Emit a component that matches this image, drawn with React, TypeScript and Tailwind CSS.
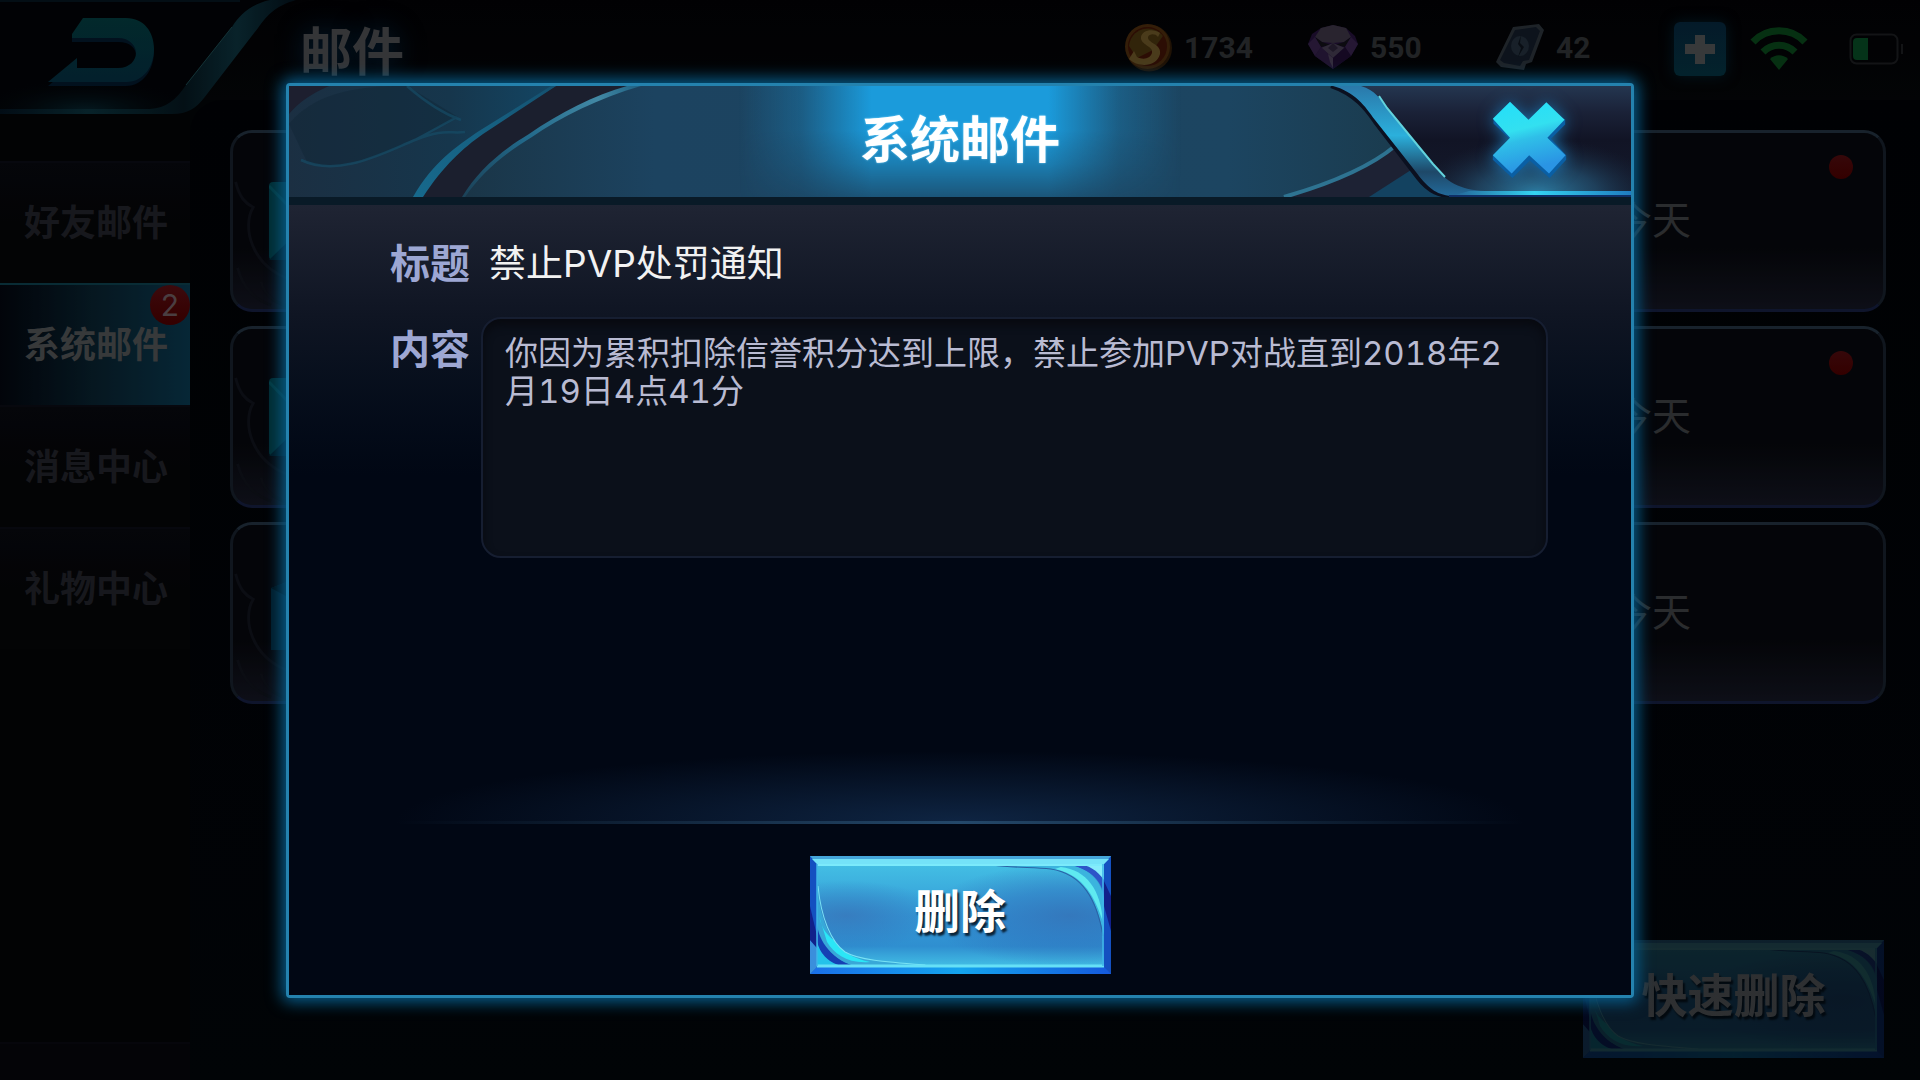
import { useId } from "react";
import clsx from "clsx";

const tabs = [
  { label: "好友邮件", count: 0 },
  { label: "系统邮件", count: 2 },
  { label: "消息中心", count: 0 },
  { label: "礼物中心", count: 0 },
];

const mails = [
  { id: 1, date: "今天", unread: true },
  { id: 2, date: "今天", unread: true },
  { id: 3, date: "今天", unread: false },
];

const ACTIVE_TAB = "系统邮件";

function CoinIcon() {
  return (
    <svg viewBox="0 0 48 50" className="h-[50px] w-12 shrink-0" aria-hidden="true">
      <ellipse cx="25" cy="26" rx="23" ry="23.5" fill="#2e1b08" />
      <circle cx="23.5" cy="24.5" r="22.5" fill="#4b2c0d" />
      <circle cx="23.5" cy="24.5" r="19.5" fill="#3f1306" />
      <path d="M5 24a19 19 0 0 1 34-10l-10 14-16 8z" fill="#47340f" />
      <path
        d="M36 11c-7-5-18-3-19 4-1 8 13 9 11 16-2 6-9 7-15 4l-3-6-5 8c9 9 28 8 31-5 2-10-13-11-12-17 1-3 7-4 10 0z"
        fill="#6b5528"
      />
    </svg>
  );
}

function GemIcon() {
  return (
    <svg viewBox="0 0 50 44" className="h-11 w-[50px] shrink-0" aria-hidden="true">
      <path d="M25 0 38 3 47 11 50 19 43 31 25 44 7 31 0 19 4 9 13 3z" fill="#24123a" />
      <path d="M13 3 25 0 38 3 43 12 36 17 25 18 14 17 7 12z" fill="#3b3444" />
      <path d="M7 12 14 17 23 20 13 22z M43 12 36 17 27 20 37 22z" fill="#121018" />
      <path d="M25 18 37 23 25 33 13 23z" fill="#443c50" />
      <path d="M25 18 20 23 25 27 30 23z" fill="#2c2338" />
      <path d="M0 19 7 12 13 22 7 31z M50 19 43 12 37 22 43 31z" fill="#35224a" />
      <path d="M13 22 25 33V44L7 31z" fill="#2f1d44" />
      <path d="M37 22 25 33V44L43 31z" fill="#1f0e32" />
      <path d="m20 29 5 4v10l-3-6z" fill="#4a4056" />
    </svg>
  );
}

function CardIcon() {
  return (
    <svg viewBox="0 0 48 46" className="h-[46px] w-12 shrink-0" aria-hidden="true">
      <path d="M17 3 43 0 48 6 36 38 30 40 28 46 5 43 0 38z" fill="#2c333a" />
      <path d="M19 6 40 3 44 7 33 36 27 37 24 42 8 39 4 36z" fill="#131c29" />
      <ellipse cx="24" cy="22" rx="9" ry="10" fill="#232f3b" />
      <path d="m25 11-3 9 3 4-3 9 6-10-4-4z" fill="#0d141d" />
    </svg>
  );
}

function WifiIcon() {
  return (
    <svg
      viewBox="0 0 58 44"
      className="h-11 w-[58px]"
      fill="none"
      stroke="#0a461b"
      strokeWidth="7"
      role="img"
      aria-label="WiFi"
    >
      <path d="M3 15C17 0 41 0 55 15" />
      <path d="M13 25C22 16 36 16 45 25" />
      <path d="M29 43 20 32c5-5 13-5 18 0z" fill="#0a461b" stroke="none" />
    </svg>
  );
}

function BatteryIcon() {
  return (
    <svg viewBox="0 0 55 32" className="h-8 w-[55px]" role="img" aria-label="电量">
      <rect x="1.5" y="1.5" width="47" height="29" rx="6" fill="none" stroke="#1c1d20" strokeWidth="2" />
      <path d="M52 11h2v10h-2z" fill="#1c1d20" />
      <path d="M8 5h11v22H8a4 4 0 0 1-4-4V9a4 4 0 0 1 4-4z" fill="#084a25" />
    </svg>
  );
}

function BackCorner() {
  return (
    <svg viewBox="0 0 300 116" className="h-[116px] w-[300px]" aria-hidden="true">
      <defs>
        <linearGradient id="corner-line" x1="0" x2="1">
          <stop offset="0" stopColor="#04131f" />
          <stop offset=".3" stopColor="#0c323c" />
          <stop offset=".62" stopColor="#06171f" />
          <stop offset=".8" stopColor="#0d323d" />
          <stop offset="1" stopColor="#04121c" />
        </linearGradient>
        <radialGradient id="corner-glow" cx="85" cy="112" r="110" gradientUnits="userSpaceOnUse" gradientTransform="matrix(1 0 0 .3 0 78)">
          <stop offset="0" stopColor="#072630" />
          <stop offset="1" stopColor="#020408" stopOpacity="0" />
        </radialGradient>
        <linearGradient id="back-arrow" x1="0" y1="0" x2="0" y2="1">
          <stop offset="0" stopColor="#043b3e" />
          <stop offset="1" stopColor="#052e40" />
        </linearGradient>
      </defs>
      <path d="M0 0H264C246 8 240 16 230 30L190 86C182 100 172 110 156 110H0z" fill="#020408" />
      <path d="M0 60H210L190 90C182 104 172 110 156 110H0z" fill="url(#corner-glow)" />
      <path
        d="M0 109H150C166 108 176 100 186 85L232 27C240 14 252 4 270 0H296C276 6 268 14 258 28L204 98C196 108 188 114 172 114H0z"
        fill="url(#corner-line)"
      />
      <path d="M186 85 232 27" stroke="#1c484e" strokeWidth="1" />
      <path d="M0 1H240" stroke="#05151f" strokeWidth="2" />
      <path
        d="M83 22H126C144 22 154 36 154 52S144 86 126 86H48L77 62V72H118C130 72 136 64 136 56S130 42 118 42H72V37z"
        fill="#03192b"
      />
      <path
        d="M83 18H126C144 18 154 32 154 49S144 82 126 82H48L77 58V68H118C130 68 136 60 136 53S130 38 118 38H72V34z"
        fill="url(#back-arrow)"
      />
    </svg>
  );
}

function GameButton({ children, dim = false }: { children: string; dim?: boolean }) {
  const id = useId();
  return (
    <button
      type="button"
      className={clsx(
        "relative grid h-[118px] w-[301px] cursor-pointer place-items-center",
        dim && "opacity-25",
      )}
    >
      <svg
        viewBox="0 0 300 118"
        preserveAspectRatio="none"
        className="absolute inset-0 size-full"
        aria-hidden="true"
      >
        <defs>
          <linearGradient id={`${id}face`} x1="0" y1="0" x2="0" y2="1">
            <stop offset="0" stopColor="#43bfe4" />
            <stop offset=".5" stopColor="#3499d6" />
            <stop offset=".8" stopColor="#2f8fd0" />
            <stop offset="1" stopColor="#43c0e6" />
          </linearGradient>
          <radialGradient id={`${id}right`} cx=".88" cy=".5" r=".5">
            <stop offset="0" stopColor="#3470b6" stopOpacity=".8" />
            <stop offset=".5" stopColor="#2f70bc" stopOpacity=".5" />
            <stop offset="1" stopColor="#2d69b4" stopOpacity="0" />
          </radialGradient>
          <radialGradient id={`${id}left`} cx=".1" cy=".5" r=".34">
            <stop offset="0" stopColor="#3874b8" stopOpacity=".75" />
            <stop offset="1" stopColor="#2f6cb8" stopOpacity="0" />
          </radialGradient>
          <linearGradient id={`${id}bottom`}>
            <stop offset="0" stopColor="#1a6fe8" />
            <stop offset=".5" stopColor="#14a4ee" />
            <stop offset="1" stopColor="#1559dd" />
          </linearGradient>
        </defs>
        <path d="M0 0H300V118H0z" fill="#1450c0" />
        <path d="M0 0H300L293 8H7z" fill="#45a6da" />
        <path d="M2 3H298L293 8H7z" fill="#74e2f8" />
        <path d="M0 118 7 111H293L300 118z" fill={`url(#${id}bottom)`} />
        <path d="M0 84 7 92V111L0 118z" fill="#3a8fdc" />
        <path d="M293 25 300 40V75L293 50z" fill="#11208a" />
        <path d="M0 50 7 80V92L0 84z" fill="#11208a" />
        <path d="M7 8H293V111H7z" fill={`url(#${id}face)`} />
        <path d="M7 8H293V111H7z" fill={`url(#${id}right)`} />
        <path d="M7 8H293V111H7z" fill={`url(#${id}left)`} />
        {/* lower left ribbon */}
        <path d="M7 84C12 98 22 106 34 110H7z" fill="#24c2ea" />
        <path d="M7 60C10 90 24 104 46 110H32C16 106 10 96 7 86z" fill="#1540b4" />
        <path d="M7 30C10 62 20 86 34 96 46 104 74 106 115 110H44C18 102 7 80 7 66z" fill="#38a8d8" />
        <path d="M9 60C12 74 18 80 24 84 32 96 42 102 60 106 38 108 24 98 17 86z" fill="#2be6f6" />
        <path d="M8 30C11 62 21 86 35 96 48 104 76 106 115 109" fill="none" stroke="#79e3f5" strokeWidth="1" />
        {/* upper right ribbon */}
        <path d="M262 8H293V30C286 16 276 10 262 8z" fill="#86ecfb" />
        <path d="M250 8C274 10 288 20 293 38V24C286 14 278 9 266 8z" fill="#2d55c8" />
        <path d="M182 8H254C278 12 290 24 293 42V80C286 44 272 18 240 13 222 11 204 12 182 8z" fill="#3bb4de" />
        <path d="M250 11C276 14 290 34 292 66 282 34 268 18 244 13z" fill="#5feaf0" />
        <path d="M182 9C204 12 222 11 240 13 272 18 286 44 292 80" fill="none" stroke="#2a62a6" strokeWidth="1" />
        <path d="M7 9H293" stroke="#7beafb" strokeWidth="2" />
        <path d="M7 110H293" stroke="#66e0f6" strokeWidth="3" />
        <path d="M7 8V110M292 8V110" stroke="#3fb6ea" strokeWidth="1.5" />
      </svg>
      <span className="relative pb-2 text-[46px] leading-none font-bold text-white [text-shadow:2px_3px_2px_#0a2236]">
        {children}
      </span>
    </button>
  );
}

function MailIcon({ opened }: { opened: boolean }) {
  return (
    <svg viewBox="0 0 78 78" className="size-[78px]" aria-hidden="true">
      {opened ? (
        <>
          <path d="M2 14 39 0 76 14V76H2z" fill="#04283a" />
          <path d="M2 14 39 34 76 14 39 0z" fill="#02151f" />
        </>
      ) : (
        <>
          <rect width="78" height="78" rx="4" fill="#034048" />
          <path d="M0 78 39 40 78 78z" fill="#02222e" />
          <path d="M0 4 39 44 78 4" fill="none" stroke="#06525c" strokeWidth="3" />
        </>
      )}
    </svg>
  );
}

function MailRow({ mail }: { mail: (typeof mails)[number] }) {
  return (
    <li className="relative flex h-[182px] items-center overflow-hidden rounded-[22px] border-3 border-t-[#233240] border-r-[#17202b] border-b-[#161f40] border-l-[#17202b] bg-linear-to-b from-[#07080d] from-65% to-[#141622] pr-[192px] pl-9">
      <svg
        viewBox="0 0 60 180"
        className="absolute top-0 left-0 h-full w-[60px]"
        fill="none"
        stroke="#10131c"
        strokeWidth="3"
        aria-hidden="true"
      >
        <path d="M2 50C6 66 12 72 20 76 8 96 18 136 58 150" />
        <path d="M4 138C10 160 22 170 38 176M28 152C32 168 44 174 58 178" />
      </svg>
      <MailIcon opened={!mail.unread} />
      <time className="ml-auto pb-1 text-[39px] leading-none font-normal text-[#3d3f43]">{mail.date}</time>
      {mail.unread && (
        <span className="absolute top-[22px] right-[30px] size-6 rounded-full bg-linear-to-b from-[#4d0c0f] to-[#4a0000]" />
      )}
    </li>
  );
}

function DialogHeaderArt() {
  return (
    <svg
      viewBox="0 0 1342 111"
      preserveAspectRatio="none"
      className="absolute inset-0 size-full"
      aria-hidden="true"
    >
      <defs>
        <linearGradient id="bar-left">
          <stop offset="0" stopColor="#1b2f42" />
          <stop offset=".12" stopColor="#16364c" />
          <stop offset=".2" stopColor="#134664" />
        </linearGradient>
        <linearGradient id="bar-main" x1="174" x2="1130" gradientUnits="userSpaceOnUse">
          <stop offset="0" stopColor="#1a3547" />
          <stop offset=".2" stopColor="#1c4360" />
          <stop offset=".8" stopColor="#1c4561" />
          <stop offset="1" stopColor="#1a3a4c" />
        </linearGradient>
        <linearGradient id="glow-x">
          <stop offset="0" stopColor="#1b98d8" stopOpacity="0" />
          <stop offset=".14" stopColor="#1b98d8" stopOpacity=".3" />
          <stop offset=".3" stopColor="#1b9bdb" />
          <stop offset=".7" stopColor="#1b9bdb" />
          <stop offset=".86" stopColor="#1b98d8" stopOpacity=".3" />
          <stop offset="1" stopColor="#1b98d8" stopOpacity="0" />
        </linearGradient>
        <linearGradient id="glow-y" x1="0" y1="0" x2="0" y2="1">
          <stop offset="0" stopColor="#fff" />
          <stop offset=".4" stopColor="#fff" />
          <stop offset=".7" stopColor="#aaa" />
          <stop offset="1" stopColor="#333" />
        </linearGradient>
        <mask id="glow-mask">
          <path d="M450 0H892V111H450z" fill="url(#glow-y)" />
        </mask>
        <linearGradient id="edge-outer" x1="127" y1="111" x2="267" y2="0" gradientUnits="userSpaceOnUse">
          <stop offset="0" stopColor="#17698c" />
          <stop offset=".6" stopColor="#165f80" />
          <stop offset="1" stopColor="#14506f" />
        </linearGradient>
        <linearGradient id="edge-inner" x1="175" y1="111" x2="350" y2="0" gradientUnits="userSpaceOnUse">
          <stop offset="0" stopColor="#1b4258" />
          <stop offset=".4" stopColor="#22698a" />
          <stop offset=".8" stopColor="#4288a4" />
          <stop offset="1" stopColor="#1f6284" />
        </linearGradient>
        <linearGradient id="bar-corner" x1="0" y1="0" x2="0" y2="1">
          <stop offset="0" stopColor="#243650" />
          <stop offset=".25" stopColor="#1a2137" />
          <stop offset=".5" stopColor="#111425" />
          <stop offset="1" stopColor="#141a2c" />
        </linearGradient>
        <radialGradient id="corner-shine" cx="0" cy="0" r="1" gradientUnits="userSpaceOnUse" gradientTransform="translate(1248 108) scale(120 56)">
          <stop offset="0" stopColor="#2d7fa6" />
          <stop offset=".5" stopColor="#265a7c" stopOpacity=".6" />
          <stop offset="1" stopColor="#1a2a40" stopOpacity="0" />
        </radialGradient>
        <linearGradient id="ribbon" x1="0" y1="0" x2="0" y2="1">
          <stop offset="0" stopColor="#2a78aa" />
          <stop offset=".45" stopColor="#2bb0dc" />
          <stop offset=".78" stopColor="#1e4868" />
          <stop offset="1" stopColor="#236a9a" />
        </linearGradient>
        <linearGradient id="corner-edge" x1="1160" x2="1342" gradientUnits="userSpaceOnUse">
          <stop offset="0" stopColor="#235f92" />
          <stop offset=".47" stopColor="#35d4f2" />
          <stop offset="1" stopColor="#1f7cc0" />
        </linearGradient>
      </defs>
      <path d="M0 0H1342V111H0z" fill="url(#bar-left)" />
      <path d="M0 0H40C22 8 10 16 0 28z" fill="#1d1f2f" />
      <path d="M0 38C30 0 90 0 118 0L169 31C110 60 60 90 18 76z" fill="#0f2230" opacity=".35" />
      <path
        d="M118 0C134 14 150 26 172 34M12 74C50 92 96 66 126 54S160 48 176 46M126 54 168 31"
        fill="none"
        stroke="#16506a"
        strokeWidth="2.5"
        opacity=".6"
      />
      <path d="M131 111C150 76 175 58 192 46L267 0H350C300 14 262 34 241 52 212 70 190 90 174 111z" fill="#1b1f2e" />
      <path d="M174 111C190 86 212 68 241 50 272 28 310 10 350 0H1110V111z" fill="url(#bar-main)" />
      <path d="M124 111C144 76 168 60 190 45L262 0H267L194 48C174 62 154 80 134 111z" fill="url(#edge-outer)" />
      <path
        d="M173 111C188 86 210 66 240 48 270 27 306 9 338 0H352C310 12 272 31 243 51 213 69 192 88 176 111z"
        fill="url(#edge-inner)"
      />
      <path d="M450 0H892V111H450z" fill="url(#glow-x)" mask="url(#glow-mask)" />
      <path d="M995 111C1040 98 1080 82 1106 60L1150 84V111z" fill="#1d2234" />
      <path d="M1080 111 1122 84 1160 111z" fill="#134260" />
      <path d="M995 111C1040 98 1080 82 1106 60" fill="none" stroke="#2e7391" strokeWidth="4" />
      <path d="M1066 0C1086 4 1092 16 1100 28L1140 84C1152 100 1162 106 1186 108H1342V0z" fill="url(#bar-corner)" />
      <path d="M1130 50H1342V108H1186C1162 106 1152 98 1140 84z" fill="url(#corner-shine)" />
      <path
        d="M1042 0C1066 8 1078 24 1086 36L1129 92C1139 105 1150 111 1170 111"
        fill="none"
        stroke="#0b1020"
        strokeWidth="4"
      />
      <path
        d="M1044 0H1072C1086 4 1092 14 1098 22L1144 78C1156 96 1172 104 1196 105V110H1166C1148 110 1140 102 1131 91L1086 34C1076 20 1066 6 1044 0z"
        fill="url(#ribbon)"
      />
      <path d="M1090 10 1098 22 1144 78 1156 91" fill="none" stroke="#62d2dc" strokeWidth="2" />
      <path d="M1180 105H1342V109H1166z" fill="url(#corner-edge)" />
      <path d="M1160 110H1342" stroke="#0f2f66" strokeWidth="2" />
    </svg>
  );
}

function CloseIcon() {
  return (
    <svg viewBox="276 58 226 236" className="h-[78px] w-[75px]" aria-hidden="true">
      <defs>
        <linearGradient id="close-face" x1="0" y1="0" x2=".25" y2="1">
          <stop offset="0" stopColor="#22dffa" />
          <stop offset=".45" stopColor="#33e0f0" />
          <stop offset=".6" stopColor="#2fbfe8" />
          <stop offset="1" stopColor="#2a94e4" />
        </linearGradient>
      </defs>
      <path
        d="M332 72 390 127 442 74 497 115V129L454 172 500 222V236L450 291 390 238 337 291 278 236V222L330 174 280 126V112z"
        fill="#0a5fa4"
      />
      <path
        d="M330 60 386 115 440 62 495 115 443 169 498 222 448 277 388 222 335 277 278 222 330 169 278 112z"
        fill="url(#close-face)"
      />
    </svg>
  );
}

function MailDialog() {
  return (
    <section
      role="dialog"
      aria-modal="true"
      aria-labelledby="dialog-title"
      className="flex flex-1 flex-col rounded-sm border-3 border-[#2482ae] bg-[#010714] shadow-[0_0_16px_4px_#075f8e]"
    >
      <header className="relative grid h-[119px] grid-cols-[1fr_auto_1fr] items-center border-b-8 border-[#091a27]">
        <DialogHeaderArt />
        <h2
          id="dialog-title"
          className="relative col-start-2 pb-1 text-[50px] leading-none font-bold text-white [text-shadow:0_0_2px_#8fdcff]"
        >
          系统邮件
        </h2>
        <button
          type="button"
          aria-label="关闭"
          className="relative mr-16 cursor-pointer justify-self-end pb-1 drop-shadow-[0_0_8px_#1b6ea8]"
        >
          <CloseIcon />
        </button>
      </header>

      <div className="flex flex-1 flex-col bg-linear-to-b from-[#1f2433] via-[#0f1523] via-[110px] to-[#010714] to-[270px]">
        <dl className="grid grid-cols-[80px_1fr] gap-x-[11px] gap-y-[29px] pt-[35px] pr-[83px] pl-[101px] tabular-nums">
          <dt className="text-[40px] leading-[48px] font-bold text-[#9da7d3]">标题</dt>
          <dd className="pl-2 text-[37px] leading-[48px] text-[#f2f2f2]">禁止PVP处罚通知</dd>
          <dt className="pt-[9px] text-[40px] leading-[48px] font-bold text-[#9da7d3]">内容</dt>
          <dd className="min-h-[241px] rounded-[20px] border-2 border-[#161e31] bg-[#0b101a] px-[22px] py-[15px] text-[33px] leading-[38px] text-[#b9bbd2] shadow-[inset_0_6px_8px_#080a10]">
            你因为累积扣除信誉积分达到上限，禁止参加PVP对战直到2018年2月19日4点41分
          </dd>
        </dl>

        <footer className="mt-auto flex flex-col items-center pb-[21px]">
          <div className="h-[70px] w-full bg-[radial-gradient(ellipse_42%_100%_at_50%_100%,#0e2442,transparent)]" />
          <div className="mb-8 h-[3px] w-[84%] bg-linear-to-r from-transparent via-[#24486a] to-transparent" />
          <GameButton>删除</GameButton>
        </footer>
      </div>
    </section>
  );
}

export default function App() {
  return (
    <div className="relative flex min-h-screen flex-col overflow-hidden bg-[#020508] font-['Inter','Noto_Sans_CJK_SC',sans-serif]">
      <header className="relative z-10 flex h-[100px] items-start bg-linear-to-b from-[#020205] to-[#050709] pr-4">
        <button type="button" aria-label="返回" className="flex h-[100px] w-[300px] cursor-pointer items-start">
          <BackCorner />
        </button>
        <h1 className="pt-[27px] text-[52px] leading-none font-bold text-[#4b4c50] [text-shadow:0_0_24px_#04253f]">
          邮件
        </h1>
        <div className="ml-auto flex h-[98px] items-center font-['Roboto',sans-serif] text-[30px] font-bold text-[#303335]">
          <div className="flex w-[184px] items-center gap-3 pb-1">
            <CoinIcon />
            1734
          </div>
          <div className="flex w-[188px] items-center gap-3 pb-1">
            <GemIcon />
            550
          </div>
          <div className="flex w-[178px] items-center gap-3 pb-1">
            <CardIcon />
            42
          </div>
          <button
            type="button"
            aria-label="充值"
            className="mr-6 grid h-[54px] w-[52px] cursor-pointer place-items-center rounded-md bg-linear-to-b from-[#06263c] to-[#05323f] shadow-[0_0_14px_#03202c]"
          >
            <svg viewBox="0 0 32 32" className="size-8" aria-hidden="true">
              <path d="M11 2h10v9h10v10H21v10H11V21H1V11h10z" fill="#505254" />
            </svg>
          </button>
          <WifiIcon />
          <div className="ml-[41px] flex">
            <BatteryIcon />
          </div>
        </div>
      </header>

      <div className="flex flex-1">
        <nav className="flex w-[190px] shrink-0 flex-col bg-[#040507] pt-[61px]">
          {tabs.map((tab) => {
            const active = tab.label === ACTIVE_TAB;
            return (
              <button
                key={tab.label}
                type="button"
                className={clsx(
                  "relative h-[122px] cursor-pointer border-t-2 pl-6 text-left text-[36px] font-bold",
                  active
                    ? "border-[#0d3f4c] bg-linear-to-r from-[#03070f] via-[#09222f] to-[#09384e] text-[#505254]"
                    : "border-[#0b0c15] bg-linear-to-b from-[#08090f] to-[#050608] to-50% text-[#22232a]",
                )}
              >
                {tab.label}
                {tab.count > 0 && (
                  <span className="absolute top-0 right-0 grid size-10 place-items-center rounded-full bg-linear-to-b from-[#560f13] to-[#4b0000] text-[30px] leading-none font-normal text-[#6b5a5d]">
                    {tab.count}
                  </span>
                )}
              </button>
            );
          })}
          <div className="mt-auto h-[38px] border-t-2 border-[#090a10] bg-[#06070b]" />
        </nav>

        <main className="flex flex-1 flex-col rounded-tl-[32px] bg-linear-to-b from-[#010206] to-[#02060a] pt-[30px] pr-[34px] pb-[22px] pl-10">
          <ul className="flex flex-col gap-[14px]">
            {mails.map((mail) => (
              <MailRow key={mail.id} mail={mail} />
            ))}
          </ul>
          <div className="mt-auto flex justify-end pr-0.5">
            <GameButton dim>快速删除</GameButton>
          </div>
        </main>
      </div>

      <div className="absolute inset-0 z-20 flex bg-black/30 px-[286px] pt-[83px] pb-[82px]">
        <MailDialog />
      </div>
    </div>
  );
}
